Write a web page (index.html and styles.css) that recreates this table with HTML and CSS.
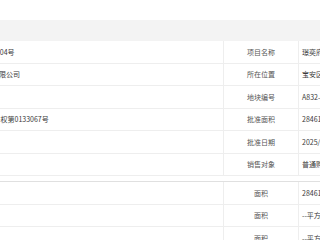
FILE: index.html
```html
<!DOCTYPE html>
<html lang="zh">
<head>
<meta charset="utf-8">
<link rel="stylesheet" href="styles.css">
</head>
<body>
<div class="page">
  <div class="top"></div>
  <div class="head"></div>
  <div class="table">
    <div class="row"><div class="c-left">深房许字(2025)宝安000004号</div><div class="c-label">项目名称</div><div class="c-val">璟奕府</div></div>
    <div class="row"><div class="c-left">深圳市宝安区某某置业有限公司</div><div class="c-label">所在位置</div><div class="c-val">宝安区新安街道</div></div>
    <div class="row"><div class="c-left"></div><div class="c-label">地块编号</div><div class="c-val">A832-0356</div></div>
    <div class="row"><div class="c-left">粤（2025）深圳市不动产权第0133067号</div><div class="c-label">批准面积</div><div class="c-val">28461.46平方米</div></div>
    <div class="row"><div class="c-left"></div><div class="c-label">批准日期</div><div class="c-val">2025/06/18</div></div>
    <div class="row"><div class="c-left"></div><div class="c-label">销售对象</div><div class="c-val">普通购房人</div></div>
  </div>
  <div class="sep"></div>
  <div class="table">
    <div class="row"><div class="c-left"></div><div class="c-label">面积</div><div class="c-val">28461.46平方米</div></div>
    <div class="row"><div class="c-left"></div><div class="c-label">面积</div><div class="c-val">--平方米</div></div>
    <div class="row"><div class="c-left"></div><div class="c-label">面积</div><div class="c-val">--平方米</div></div>
  </div>
</div>
</body>
</html>
```
FILE: styles.css
```css
html, body {
  margin: 0;
  padding: 0;
  background: #ffffff;
}
body {
  font-family: "Noto Sans CJK SC", "Noto Sans", sans-serif;
  font-size: 7px;
  color: #3a3a3a;
  overflow: hidden;
  width: 320px;
  height: 240px;
}
.page {
  width: 320px;
  overflow: hidden;
}
.top {
  height: 20px;
}
.head {
  height: 21px;
  background: #f3f3f3;
}
.table {
  margin-left: -91px;
  width: 530px;
}
.row {
  display: grid;
  grid-template-columns: 315px 75px 140px;
  height: 22.5px;
  box-sizing: border-box;
  border-bottom: 1px solid #eeeeee;
  align-items: stretch;
}
.c-left, .c-label, .c-val {
  display: flex;
  align-items: center;
  white-space: nowrap;
  overflow: hidden;
}
.c-left {
  padding-left: 13px;
  border-right: 1px solid #eeeeee;
}
.c-label {
  justify-content: center;
  color: #555555;
  border-right: 1px solid #eeeeee;
}
.c-val {
  padding-left: 3px;
}
.sep {
  height: 6px;
  box-sizing: border-box;
  border-bottom: 1px solid #e0e0e0;
}
```
